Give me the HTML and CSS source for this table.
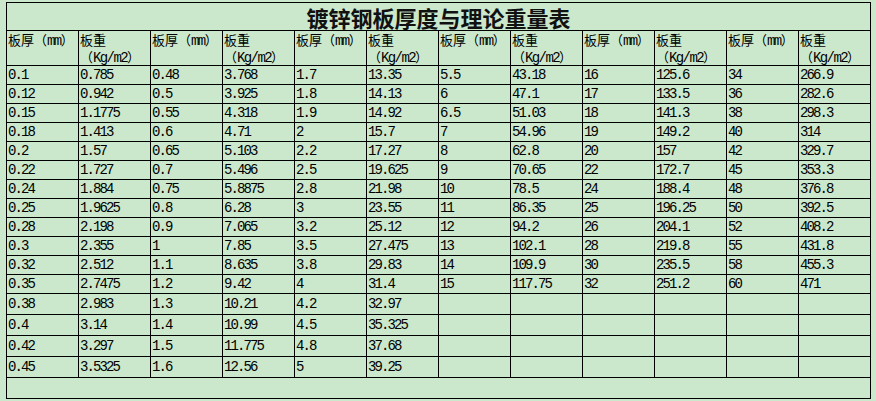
FILE: index.html
```html
<!DOCTYPE html>
<html lang="zh-CN">
<head>
<meta charset="utf-8">
<title>镀锌钢板厚度与理论重量表</title>
<link rel="stylesheet" href="styles.css">
</head>
<body>
<div class="sheet">
  <div class="title"><span class="ttx">镀锌钢板厚度与理论重量表</span></div>

  <div class="hd">板厚<span class="fw">（</span><span class="a">mm</span><span class="fw">）</span></div>
  <div class="hd">板重<br><span class="fw">（</span><span class="a">Kg/m2</span><span class="fw">）</span></div>
  <div class="hd">板厚<span class="fw">（</span><span class="a">mm</span><span class="fw">）</span></div>
  <div class="hd">板重<br><span class="fw">（</span><span class="a">Kg/m2</span><span class="fw">）</span></div>
  <div class="hd">板厚<span class="fw">（</span><span class="a">mm</span><span class="fw">）</span></div>
  <div class="hd">板重<br><span class="fw">（</span><span class="a">Kg/m2</span><span class="fw">）</span></div>
  <div class="hd">板厚<span class="fw">（</span><span class="a">mm</span><span class="fw">）</span></div>
  <div class="hd">板重<br><span class="fw">（</span><span class="a">Kg/m2</span><span class="fw">）</span></div>
  <div class="hd">板厚<span class="fw">（</span><span class="a">mm</span><span class="fw">）</span></div>
  <div class="hd">板重<br><span class="fw">（</span><span class="a">Kg/m2</span><span class="fw">）</span></div>
  <div class="hd">板厚<span class="fw">（</span><span class="a">mm</span><span class="fw">）</span></div>
  <div class="hd">板重<br><span class="fw">（</span><span class="a">Kg/m2</span><span class="fw">）</span></div>

  <div class="c">0.1</div><div class="c">0.785</div><div class="c">0.48</div><div class="c">3.768</div><div class="c">1.7</div><div class="c">13.35</div><div class="c">5.5</div><div class="c">43.18</div><div class="c">16</div><div class="c">125.6</div><div class="c">34</div><div class="c">266.9</div>
  <div class="c">0.12</div><div class="c">0.942</div><div class="c">0.5</div><div class="c">3.925</div><div class="c">1.8</div><div class="c">14.13</div><div class="c">6</div><div class="c">47.1</div><div class="c">17</div><div class="c">133.5</div><div class="c">36</div><div class="c">282.6</div>
  <div class="c">0.15</div><div class="c">1.1775</div><div class="c">0.55</div><div class="c">4.318</div><div class="c">1.9</div><div class="c">14.92</div><div class="c">6.5</div><div class="c">51.03</div><div class="c">18</div><div class="c">141.3</div><div class="c">38</div><div class="c">298.3</div>
  <div class="c">0.18</div><div class="c">1.413</div><div class="c">0.6</div><div class="c">4.71</div><div class="c">2</div><div class="c">15.7</div><div class="c">7</div><div class="c">54.96</div><div class="c">19</div><div class="c">149.2</div><div class="c">40</div><div class="c">314</div>
  <div class="c">0.2</div><div class="c">1.57</div><div class="c">0.65</div><div class="c">5.103</div><div class="c">2.2</div><div class="c">17.27</div><div class="c">8</div><div class="c">62.8</div><div class="c">20</div><div class="c">157</div><div class="c">42</div><div class="c">329.7</div>
  <div class="c">0.22</div><div class="c">1.727</div><div class="c">0.7</div><div class="c">5.496</div><div class="c">2.5</div><div class="c">19.625</div><div class="c">9</div><div class="c">70.65</div><div class="c">22</div><div class="c">172.7</div><div class="c">45</div><div class="c">353.3</div>
  <div class="c">0.24</div><div class="c">1.884</div><div class="c">0.75</div><div class="c">5.8875</div><div class="c">2.8</div><div class="c">21.98</div><div class="c">10</div><div class="c">78.5</div><div class="c">24</div><div class="c">188.4</div><div class="c">48</div><div class="c">376.8</div>
  <div class="c">0.25</div><div class="c">1.9625</div><div class="c">0.8</div><div class="c">6.28</div><div class="c">3</div><div class="c">23.55</div><div class="c">11</div><div class="c">86.35</div><div class="c">25</div><div class="c">196.25</div><div class="c">50</div><div class="c">392.5</div>
  <div class="c">0.28</div><div class="c">2.198</div><div class="c">0.9</div><div class="c">7.065</div><div class="c">3.2</div><div class="c">25.12</div><div class="c">12</div><div class="c">94.2</div><div class="c">26</div><div class="c">204.1</div><div class="c">52</div><div class="c">408.2</div>
  <div class="c">0.3</div><div class="c">2.355</div><div class="c">1</div><div class="c">7.85</div><div class="c">3.5</div><div class="c">27.475</div><div class="c">13</div><div class="c">102.1</div><div class="c">28</div><div class="c">219.8</div><div class="c">55</div><div class="c">431.8</div>
  <div class="c">0.32</div><div class="c">2.512</div><div class="c">1.1</div><div class="c">8.635</div><div class="c">3.8</div><div class="c">29.83</div><div class="c">14</div><div class="c">109.9</div><div class="c">30</div><div class="c">235.5</div><div class="c">58</div><div class="c">455.3</div>
  <div class="c">0.35</div><div class="c">2.7475</div><div class="c">1.2</div><div class="c">9.42</div><div class="c">4</div><div class="c">31.4</div><div class="c">15</div><div class="c">117.75</div><div class="c">32</div><div class="c">251.2</div><div class="c">60</div><div class="c">471</div>
  <div class="c t">0.38</div><div class="c t">2.983</div><div class="c t">1.3</div><div class="c t">10.21</div><div class="c t">4.2</div><div class="c t">32.97</div><div class="c"></div><div class="c"></div><div class="c"></div><div class="c"></div><div class="c"></div><div class="c"></div>
  <div class="c t">0.4</div><div class="c t">3.14</div><div class="c t">1.4</div><div class="c t">10.99</div><div class="c t">4.5</div><div class="c t">35.325</div><div class="c"></div><div class="c"></div><div class="c"></div><div class="c"></div><div class="c"></div><div class="c"></div>
  <div class="c t">0.42</div><div class="c t">3.297</div><div class="c t">1.5</div><div class="c t">11.775</div><div class="c t">4.8</div><div class="c t">37.68</div><div class="c"></div><div class="c"></div><div class="c"></div><div class="c"></div><div class="c"></div><div class="c"></div>
  <div class="c t">0.45</div><div class="c t">3.5325</div><div class="c t">1.6</div><div class="c t">12.56</div><div class="c t">5</div><div class="c t">39.25</div><div class="c"></div><div class="c"></div><div class="c"></div><div class="c"></div><div class="c"></div><div class="c"></div>

  <div class="foot"></div>
</div>
</body>
</html>
```

FILE: styles.css
```css
html, body {
  margin: 0;
  padding: 0;
  background: #cce8cc;
}

body {
  width: 876px;
  height: 401px;
  overflow: hidden;
}

.sheet {
  margin: 2px 0 0 6px;
  width: 865px;
  box-sizing: border-box;
  display: grid;
  grid-template-columns: repeat(12, 72px);
  grid-template-rows: 28px 35px repeat(12, 19px) repeat(5, 21px);
  border-left: 1px solid #000;
  border-top: 1px solid #000;
  color: #000;
}

.sheet > div {
  box-sizing: border-box;
  border-right: 1px solid #000;
  border-bottom: 1px solid #000;
  overflow: hidden;
  white-space: nowrap;
}

.sheet > .title {
  grid-column: 1 / -1;
  display: flex;
  align-items: center;
  justify-content: center;
  overflow: visible;
  font-family: "Noto Sans CJK SC", sans-serif;
  font-weight: 700;
  font-size: 22px;
  color: #111;
}

.ttx {
  display: block;
  line-height: 24px;
  height: 24px;
}

.hd {
  font-family: "Noto Sans CJK SC", sans-serif;
  font-size: 13px;
  line-height: 17px;
  padding: 0 0 0 1px;
}

.hd .a {
  font-family: "Liberation Mono", monospace;
  font-size: 14px;
  letter-spacing: -1.6px;
}

.c {
  font-family: "Liberation Mono", monospace;
  font-size: 14px;
  letter-spacing: -1.9px;
  line-height: 15px;
  padding: 2px 0 0 1px;
}

.c.t {
  padding-top: 3px;
}

.foot {
  grid-column: 1 / -1;
}
```
